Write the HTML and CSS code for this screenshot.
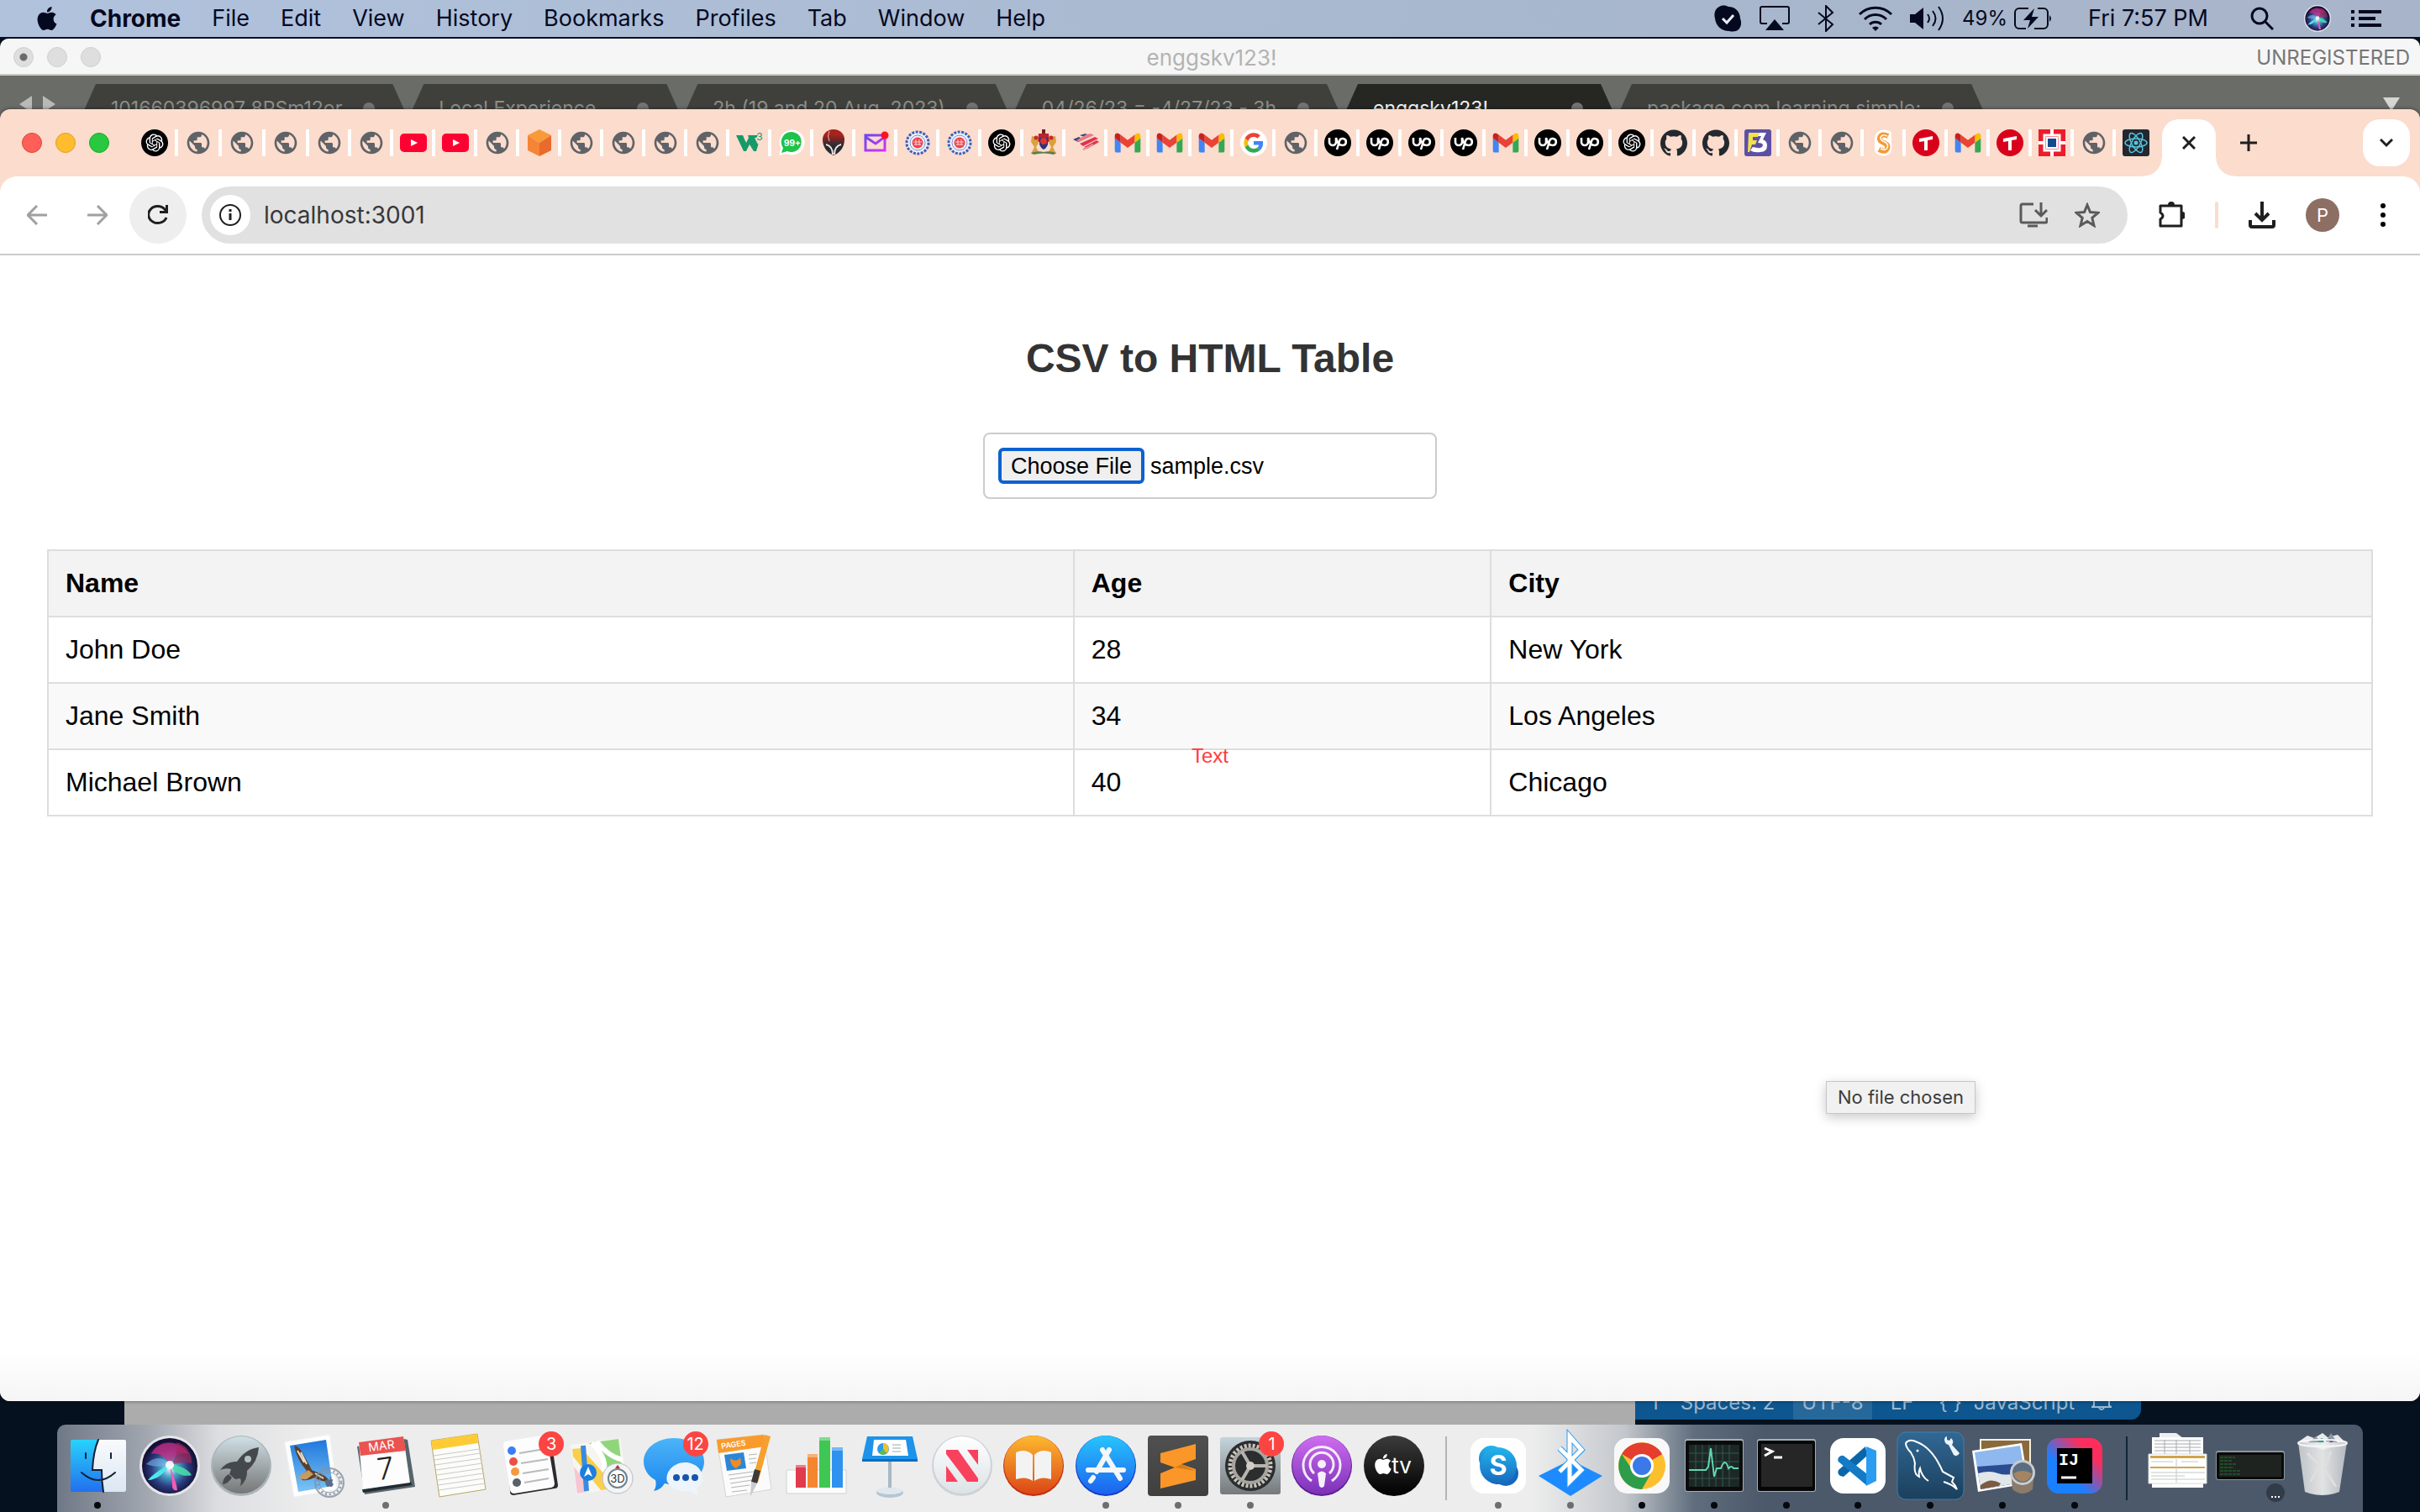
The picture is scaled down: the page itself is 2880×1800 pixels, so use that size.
FILE: index.html
```html
<!DOCTYPE html>
<html lang="en">
<head>
<meta charset="utf-8">
<title>CSV to HTML Table</title>
<link rel="stylesheet" href="styles.css">
</head>
<body>
<svg class="sprite" aria-hidden="true">
  <defs>
    <linearGradient id="gFinder" x1="0" y1="0" x2="0" y2="1"><stop offset="0" stop-color="#27d3fc"/><stop offset="1" stop-color="#2270ee"/></linearGradient>
    <linearGradient id="gFace" x1="0" y1="0" x2="0" y2="1"><stop offset="0" stop-color="#f9fafc"/><stop offset="1" stop-color="#dbe7f3"/></linearGradient>
    <radialGradient id="gSiri" cx=".5" cy=".55" r=".5"><stop offset="0" stop-color="#e8fbff"/><stop offset=".3" stop-color="#4aa3c9"/><stop offset=".65" stop-color="#2b3d80"/><stop offset="1" stop-color="#130f35"/></radialGradient>
    <linearGradient id="gRocket" x1="0" y1="0" x2="0" y2="1"><stop offset="0" stop-color="#cfe0e6"/><stop offset="1" stop-color="#767676"/></linearGradient>
    <linearGradient id="gSky" x1="0" y1="0" x2="0" y2="1"><stop offset="0" stop-color="#1f78dd"/><stop offset="1" stop-color="#7cc4f4"/></linearGradient>
    <linearGradient id="gMsg" x1="0" y1="0" x2="0" y2="1"><stop offset="0" stop-color="#4cb4f8"/><stop offset="1" stop-color="#1a86ee"/></linearGradient>
    <linearGradient id="gBooks" x1="0" y1="0" x2="0" y2="1"><stop offset="0" stop-color="#fdb92f"/><stop offset="1" stop-color="#dc4517"/></linearGradient>
    <linearGradient id="gStore" x1="0" y1="0" x2="0" y2="1"><stop offset="0" stop-color="#27c5fd"/><stop offset="1" stop-color="#1c62ef"/></linearGradient>
    <linearGradient id="gPod" x1="0" y1="0" x2="0" y2="1"><stop offset="0" stop-color="#cf6df0"/><stop offset="1" stop-color="#7b31b8"/></linearGradient>
    <linearGradient id="gNews" x1="0" y1="0" x2="0" y2="1"><stop offset="0" stop-color="#ffffff"/><stop offset="1" stop-color="#dde2e6"/></linearGradient>
    <linearGradient id="gTv" x1="0" y1="0" x2="0" y2="1"><stop offset="0" stop-color="#3c3c3c"/><stop offset="1" stop-color="#000000"/></linearGradient>
    <linearGradient id="gSubl" x1="0" y1="0" x2="0" y2="1"><stop offset="0" stop-color="#505050"/><stop offset="1" stop-color="#3f3f3f"/></linearGradient>
    <linearGradient id="gGear" x1="0" y1="0" x2="0" y2="1"><stop offset="0" stop-color="#c5d5dc"/><stop offset="1" stop-color="#75797b"/></linearGradient>
    <linearGradient id="gSkype" x1="0" y1="0" x2="0" y2="1"><stop offset="0" stop-color="#22b5ec"/><stop offset="1" stop-color="#1768bd"/></linearGradient>
    <linearGradient id="gSql" x1="0" y1="0" x2="0" y2="1"><stop offset="0" stop-color="#316894"/><stop offset="1" stop-color="#1b3f5c"/></linearGradient>
    <linearGradient id="gIj" x1="0" y1="1" x2="1" y2="0"><stop offset=".35" stop-color="#1a80ff"/><stop offset=".75" stop-color="#fb2e5d"/></linearGradient>
    <linearGradient id="gMail" x1="0" y1="0" x2="1" y2="1"><stop offset="0" stop-color="#6a48f2"/><stop offset="1" stop-color="#d633f3"/></linearGradient>
    <linearGradient id="gBall" x1="0" y1="0" x2="0" y2="1"><stop offset=".2" stop-color="#a8231d"/><stop offset=".65" stop-color="#232b33"/></linearGradient>
    <linearGradient id="gCan" x1="0" y1="0" x2="1" y2="0"><stop offset="0" stop-color="#cdd0d2"/><stop offset=".5" stop-color="#f2f2f1"/><stop offset="1" stop-color="#bfc3c6"/></linearGradient>
  </defs>
  <symbol id="globe" viewBox="0 0 24 24"><path fill="#5f6368" d="M12 2C6.480 2 2 6.480 2 12s4.480 10 10 10 10-4.480 10-10S17.520 2 12 2zm-1 17.930c-3.950-.490-7-3.850-7-7.930 0-.620.080-1.210.210-1.790L9 15v1c0 1.100.900 2 2 2v1.930zm6.900-2.540c-.260-.810-1-1.390-1.900-1.390h-1v-3c0-.550-.450-1-1-1H8v-2h2c.550 0 1-.450 1-1V7h2c1.100 0 2-.900 2-2v-.410c2.930 1.190 5 4.060 5 7.410 0 2.080-.800 3.970-2.100 5.390z"/></symbol>
  <symbol id="gpt" viewBox="0 0 32 32"><circle cx="16" cy="16" r="16"/><path transform="translate(5.500 5.500) scale(.875)" fill="#fff" d="M22.2819 9.8211a5.9847 5.9847 0 0 0-.5157-4.9108 6.0462 6.0462 0 0 0-6.5098-2.9A6.0651 6.0651 0 0 0 4.9807 4.1818a5.9847 5.9847 0 0 0-3.9977 2.9 6.0462 6.0462 0 0 0 .7427 7.0966 5.98 5.98 0 0 0 .511 4.9107 6.051 6.051 0 0 0 6.5146 2.9001A5.9847 5.9847 0 0 0 13.2599 24a6.0557 6.0557 0 0 0 5.7718-4.2058 5.9894 5.9894 0 0 0 3.9977-2.9001 6.0557 6.0557 0 0 0-.7475-7.0729zm-9.022 12.6081a4.4755 4.4755 0 0 1-2.8764-1.0408l.1419-.0804 4.7783-2.7582a.7948.7948 0 0 0 .3927-.6813v-6.7369l2.02 1.1686a.071.071 0 0 1 .038.052v5.5826a4.504 4.504 0 0 1-4.4945 4.4944zm-9.6607-4.1254a4.4708 4.4708 0 0 1-.5346-3.0137l.142.0852 4.783 2.7582a.7712.7712 0 0 0 .7806 0l5.8428-3.3685v2.3324a.0804.0804 0 0 1-.0332.0615L9.74 19.9502a4.4992 4.4992 0 0 1-6.1408-1.6464zM2.3408 7.8956a4.485 4.485 0 0 1 2.3655-1.9728V11.6a.7664.7664 0 0 0 .3879.6765l5.8144 3.3543-2.0201 1.1685a.0757.0757 0 0 1-.071 0l-4.8303-2.7865A4.504 4.504 0 0 1 2.3408 7.872zm16.5963 3.8558L13.1038 8.364 15.1192 7.2a.0757.0757 0 0 1 .071 0l4.8303 2.7913a4.4944 4.4944 0 0 1-.6765 8.1042v-5.6772a.79.79 0 0 0-.407-.667zm2.0107-3.0231l-.142-.0852-4.7735-2.7818a.7759.7759 0 0 0-.7854 0L9.409 9.2297V6.8974a.0662.0662 0 0 1 .0284-.0615l4.8303-2.7866a4.4992 4.4992 0 0 1 6.6802 4.66zM8.3065 12.863l-2.02-1.1638a.0804.0804 0 0 1-.038-.0567V6.0742a4.4992 4.4992 0 0 1 7.3757-3.4537l-.142.0805L8.704 5.459a.7948.7948 0 0 0-.3927.6813zm1.0976-2.3654l2.602-1.4998 2.6069 1.4998v2.9994l-2.5974 1.4997-2.6067-1.4997Z"/></symbol>
  <symbol id="youtube" viewBox="0 0 32 32"><rect y="5" width="32" height="22" rx="5" fill="#ff0033"/><path d="M13 12l8 4-8 4z" fill="#fff"/></symbol>
  <symbol id="gmail" viewBox="50 31 92 88"><path fill="#4285f4" d="M58 108h14V74L52 59v43c0 3.320 2.690 6 6 6"/><path fill="#34a853" d="M120 108h14c3.320 0 6-2.690 6-6V59l-20 15"/><path fill="#fbbc04" d="M120 48v26l20-15v-8c0-7.420-8.470-11.650-14.400-7.200"/><path fill="#ea4335" d="M72 74V48l24 18 24-18v26L96 92"/><path fill="#c5221f" d="M52 51v8l20 15V48l-5.600-4.200c-5.940-4.450-14.400-.220-14.400 7.200"/></symbol>
  <symbol id="upwork" viewBox="0 0 32 32"><circle cx="16" cy="16" r="16"/><path d="M6 10v5a4 4 0 0 0 8 0v-5c1 5 3 9 8 9a4 4 0 1 0-4-5l-3 10" fill="none" stroke="#fff" stroke-width="2.600"/></symbol>
  <symbol id="github" viewBox="0 0 24 24"><path fill="#24292f" d="M12 .297c-6.630 0-12 5.373-12 12 0 5.303 3.438 9.800 8.205 11.385.6.113.82-.258.82-.577 0-.285-.01-1.040-.015-2.040-3.338.724-4.042-1.610-4.042-1.610C4.422 18.070 3.633 17.700 3.633 17.700c-1.087-.744.084-.729.084-.729 1.205.084 1.838 1.236 1.838 1.236 1.070 1.835 2.809 1.305 3.495.998.108-.776.417-1.305.76-1.605-2.665-.3-5.466-1.332-5.466-5.930 0-1.310.465-2.380 1.235-3.220-.135-.303-.54-1.523.105-3.176 0 0 1.005-.322 3.300 1.230.96-.267 1.980-.399 3-.405 1.020.006 2.040.138 3 .405 2.280-1.552 3.285-1.230 3.285-1.230.645 1.653.24 2.873.12 3.176.765.84 1.230 1.910 1.230 3.220 0 4.610-2.805 5.625-5.475 5.920.42.36.81 1.096.81 2.220 0 1.606-.015 2.896-.015 3.286 0 .315.21.69.825.57C20.565 22.092 24 17.592 24 12.297c0-6.627-5.373-12-12-12"/></symbol>
  <symbol id="tredt" viewBox="0 0 32 32"><circle cx="16" cy="16" r="16" fill="#d9001b"/><path d="M8 11l16-3v4l-6 1v12h-4V14l-6 1z" fill="#fff"/></symbol>
  <symbol id="seal" viewBox="0 0 32 32"><circle cx="16" cy="16" r="13" fill="#eef0fa" stroke="#3f5fb4" stroke-width="3" stroke-dasharray="3 1.500"/><circle cx="16" cy="16" r="9" fill="none" stroke="#7d92cf"/><circle cx="16" cy="16" r="6.500" fill="#f0444b"/><path d="M11 15h10M12 18h8M14 12v7M18 12v7" stroke="#fbd0d2"/></symbol>
  <symbol id="apple" viewBox="0 0 24 24"><path fill="currentColor" d="M12.152 6.896c-.948 0-2.415-1.078-3.960-1.040-2.040.027-3.910 1.183-4.961 3.014-2.117 3.675-.546 9.103 1.519 12.090 1.013 1.454 2.208 3.090 3.792 3.039 1.520-.065 2.090-.987 3.935-.987 1.831 0 2.350.987 3.960.948 1.637-.026 2.676-1.480 3.676-2.948 1.156-1.688 1.636-3.325 1.662-3.415-.039-.013-3.182-1.221-3.220-4.857-.026-3.040 2.480-4.494 2.597-4.559-1.429-2.090-3.623-2.324-4.390-2.376-2-.156-3.675 1.090-4.610 1.090zM15.530 3.830c.843-1.012 1.400-2.427 1.245-3.830-1.207.052-2.662.805-3.532 1.818-.78.896-1.454 2.338-1.273 3.714 1.338.104 2.715-.688 3.559-1.701"/></symbol>
  <symbol id="siri" viewBox="0 0 72 72"><circle cx="36" cy="36" r="36" fill="#e6e6ea"/><circle cx="36" cy="36" r="33" fill="url(#gSiri)"/><path d="M14 22C22 4 48 4 58 22c-8-3-16 0-22 13C30 24 22 20 14 22z" fill="#d02c86" opacity=".75"/><path d="M44 8c12 3 19 14 18 25-8-2-18 0-26 2 6-6 10-14 8-27z" fill="#a3285c" opacity=".7"/><path d="M36 35C24 40 14 48 10 53c10 0 20-8 26-18z" fill="#4fe6ea"/><path d="M36 35c12 0 22 5 26 12-10 3-20-2-26-12z" fill="#49dba8" opacity=".9"/><path d="M36 35c3 10 8 20 9 30-3 1-6-1-6-5 0-8-2-16-3-25z" fill="#f45bb4"/><path d="M36 35C28 25 18 24 8 34c10 4 20 3 28 1z" fill="#7ab4e8" opacity=".6"/><circle cx="36" cy="35" r="5" fill="#fff" opacity=".9"/></symbol>
</svg>

<div class="desktop">
  <header class="menubar">
    <nav class="menus" aria-label="Menu bar">
      <button class="menu" aria-label="Apple"><svg class="i28"><use href="#apple"/></svg></button>
      <button class="menu menu-app">Chrome</button>
      <button class="menu">File</button>
      <button class="menu">Edit</button>
      <button class="menu">View</button>
      <button class="menu">History</button>
      <button class="menu">Bookmarks</button>
      <button class="menu">Profiles</button>
      <button class="menu">Tab</button>
      <button class="menu">Window</button>
      <button class="menu">Help</button>
    </nav>
    <div class="status">
      <svg class="s-check" viewBox="0 0 32 32"><path d="M8 1c4-1 7 0 9 1 8 0 14 6 14 14 2 5 1 9-1 12-3 4-8 4-12 3C9 31 2 25 1 16-1 9 2 3 8 1z" fill="#04091f"/><path d="M10 16l5 5 8-9" fill="none" stroke="#e9eef6" stroke-width="3"/></svg>
      <svg class="s-airplay" viewBox="0 0 36 32"><path d="M9 22H3a2 2 0 0 1-2-2V4a2 2 0 0 1 2-2h30a2 2 0 0 1 2 2v16a2 2 0 0 1-2 2h-6" fill="none" stroke="#04091f" stroke-width="2"/><path d="M18 17l11 13H7z" fill="#04091f"/></svg>
      <svg class="s-bt" viewBox="0 0 20 32"><path d="M1 9l17 14-8 8V1l8 8L1 23" fill="none" stroke="#04091f" stroke-width="2"/></svg>
      <svg class="s-wifi" viewBox="0 0 42 32"><g fill="none" stroke="#04091f" stroke-width="3"><path d="M2 11a27 27 0 0 1 38 0M8 17a18 18 0 0 1 26 0M14 23a10 10 0 0 1 14 0"/></g><path d="M21 31l-4-4a6 6 0 0 1 8 0z" fill="#04091f"/></svg>
      <svg class="s-vol" viewBox="0 0 42 32"><path d="M0 11h6l10-8v26L6 21H0z" fill="#04091f"/><g fill="none" stroke="#04091f" stroke-width="2"><path d="M21 11q4 5 0 10M27 7q7 9 0 18M34 2q10 14 0 28"/></g></svg>
      <span class="s-battery">49%<svg viewBox="0 0 46 26"><path d="M17 1H6a5 5 0 0 0-5 5v14a5 5 0 0 0 5 5h8M28 1h7a5 5 0 0 1 5 5v14a5 5 0 0 1-5 5H24" fill="none" stroke="#04091f" stroke-width="2"/><path d="M24 1L11 15h8l-3 10 13-14h-8z" fill="#04091f"/><path d="M42 9q4 4 0 8z" fill="#04091f"/></svg></span>
      <time class="s-clock">Fri 7:57 PM</time>
      <svg class="s-search" viewBox="0 0 28 28"><circle cx="11" cy="11" r="9" fill="none" stroke="#04091f" stroke-width="3"/><path d="M18 18l9 9" stroke="#04091f" stroke-width="3"/></svg>
      <svg class="s-siri"><use href="#siri"/></svg>
      <svg class="s-list" viewBox="0 0 36 22"><path d="M0 3h4M0 11h4M0 19h4M9 3h27M9 11h20M9 19h27" stroke="#04091f" stroke-width="4"/></svg>
    </div>
  </header>

  <section class="editor" aria-label="Text editor">
    <div class="editor-title">
      <span class="lights lights-off"><i class="edited"></i><i></i><i></i></span>
      <span class="editor-name">enggskv123!</span>
      <span class="editor-reg">UNREGISTERED</span>
    </div>
    <div class="editor-strip">
      <svg class="editor-nav" viewBox="0 0 44 24"><path d="M15 2v20L0 12zM28 2v20l15-10z" fill="#b9bab7"/></svg>
      <div class="editor-tabs">
        <button class="etab">101660396997 8PSm12or<i></i></button>
        <button class="etab">Local Experience<i></i></button>
        <button class="etab">2h (19 and 20 Aug, 2023)<i></i></button>
        <button class="etab">04/26/23 = -4/27/23 - 3h<i></i></button>
        <button class="etab etab-on">enggskv123!<i></i></button>
        <button class="etab">package com.learning.simple;<i></i></button>
      </div>
      <svg class="editor-more" viewBox="0 0 20 16"><path d="M0 0h20L10 16z" fill="#d5d6d3"/></svg>
    </div>
  </section>

  <div class="backdrop"></div>
  <footer class="code-status">
    <span>1</span><span>Spaces: 2</span><span class="lit">UTF-8</span><span>LF</span><span>{ }</span><span>JavaScript</span>
    <svg class="bell" viewBox="0 0 24 28"><path d="M3 20V10a9 9 0 0 1 18 0v10l2 2H1zM9 23q3 4 6 0" fill="none" stroke="#9db8cd" stroke-width="2"/></svg>
  </footer>

  <section class="browser" aria-label="Browser">
    <div class="tabstrip">
      <span class="lights"><i class="red"></i><i class="yellow"></i><i class="green"></i></span>
      <nav class="tabs tabs-first" aria-label="Tabs">
        <button class="tab"><svg><use href="#gpt"/></svg></button>
        <button class="tab"><svg><use href="#globe"/></svg></button>
        <button class="tab"><svg><use href="#globe"/></svg></button>
        <button class="tab"><svg><use href="#globe"/></svg></button>
      </nav>
      <nav class="tabs" aria-label="More tabs">
        <button class="tab"><svg><use href="#globe"/></svg></button>
        <button class="tab"><svg><use href="#globe"/></svg></button>
        <button class="tab"><svg><use href="#youtube"/></svg></button>
        <button class="tab"><svg><use href="#youtube"/></svg></button>
        <button class="tab"><svg><use href="#globe"/></svg></button>
        <button class="tab"><svg viewBox="0 0 32 32"><path d="M16 0l14 7-14 9L2 7z" fill="#f99a38"/><path d="M2 7l14 9v16L2 25z" fill="#f58536"/><path d="M30 7l-14 9v16l14-7z" fill="#ea6a2c"/></svg></button>
        <button class="tab"><svg><use href="#globe"/></svg></button>
        <button class="tab"><svg><use href="#globe"/></svg></button>
        <button class="tab"><svg><use href="#globe"/></svg></button>
        <button class="tab"><svg><use href="#globe"/></svg></button>
        <button class="tab"><svg viewBox="0 0 32 32"><path d="M0 7h8q2 5 4 9l3-6-1-3h12l-2 3h-2l4 8 1-2-3 10h-3l-5-8-4 8H9z" fill="#159a68"/><text x="28" y="13" class="t-w3">3</text></svg></button>
        <button class="tab"><svg viewBox="0 0 32 32"><path d="M1 31l2-9a15 15 0 1 1 7 7z" fill="#fff"/><path d="M4 28l2-6a12 12 0 1 1 5 4z" fill="#1fc24d"/><text x="17" y="20" class="t-99">99+</text></svg></button>
        <button class="tab"><svg viewBox="0 0 32 32"><path d="M16 0c8 0 13 6 13 12 0 10-6 16-13 19C9 28 3 22 3 12 3 6 8 0 16 0z" fill="url(#gBall)"/><path d="M7 18q8 2 8 12M25 18q-8 2-8 12" fill="none" stroke="#f4e3da" stroke-width="2"/><path d="M11 2q-3 6 0 12" fill="none" stroke="#f1b7b0"/></svg></button>
        <button class="tab"><svg viewBox="0 0 32 32"><path d="M4 7h23v18H4zM4 9l12 8 11-8" fill="none" stroke="url(#gMail)" stroke-width="3"/><circle cx="27" cy="7" r="4.500" fill="#ff1020"/></svg></button>
        <button class="tab"><svg><use href="#seal"/></svg></button>
        <button class="tab"><svg><use href="#seal"/></svg></button>
        <button class="tab"><svg><use href="#gpt"/></svg></button>
        <button class="tab"><svg viewBox="0 0 32 32"><path d="M14 0h4v5h-4z" fill="#7c1c22"/><path d="M2 8l5 1 3 7-3 5 4 8H1l4-8-4-6zM30 8l-5 1-3 7 3 5-4 8h10l-4-8 4-6z" fill="#d9a23c"/><path d="M10 5h12l1 9-7 5-7-5z" fill="#b3262c"/><path d="M11 10h10v8q-2 5-5 6-3-1-5-6z" fill="#28367a"/><circle cx="16" cy="14" r="4" fill="#e2312f"/><circle cx="7" cy="10" r="2.500" fill="#c62a2a"/><circle cx="25" cy="10" r="2.500" fill="#c62a2a"/><path d="M1 28q8-3 15-1 7-2 15 1l-3 2q-12-3-24 0z" fill="#5d7d4d"/></svg></button>
        <button class="tab"><svg viewBox="0 0 32 32"><path d="M1 12l7-3 5 3-6 3zM9 7l7-2 5 3-4 2z" fill="#31477a"/><path d="M9 17l18-8 4 2-18 9zM14 21l15-8 3 2-14 8z" fill="#e0354b"/><path d="M17 6l5-1 4 2-18 8-3-2z" fill="#e77d8a"/><path d="M13 24l12-6" stroke="#e98f9a" stroke-width="2"/></svg></button>
        <button class="tab"><svg><use href="#gmail"/></svg></button>
        <button class="tab"><svg><use href="#gmail"/></svg></button>
        <button class="tab"><svg><use href="#gmail"/></svg></button>
        <button class="tab"><svg viewBox="-9 -9 66 66"><circle cx="24" cy="24" r="33" fill="#fff"/><path fill="#ea4335" d="M24 9.500c3.540 0 6.710 1.220 9.210 3.600l6.850-6.850C35.900 2.380 30.470 0 24 0 14.620 0 6.510 5.380 2.560 13.220l7.980 6.190C12.430 13.720 17.740 9.500 24 9.500z"/><path fill="#4285f4" d="M46.980 24.550c0-1.570-.150-3.090-.380-4.550H24v9.020h12.940c-.580 2.960-2.260 5.480-4.780 7.180l7.730 6c4.510-4.180 7.090-10.360 7.090-17.650z"/><path fill="#fbbc05" d="M10.530 28.590c-.480-1.450-.760-2.990-.760-4.590s.270-3.140.760-4.590l-7.980-6.190C.92 16.460 0 20.120 0 24c0 3.880.92 7.540 2.560 10.780l7.970-6.190z"/><path fill="#34a853" d="M24 48c6.480 0 11.930-2.130 15.890-5.810l-7.730-6c-2.150 1.450-4.920 2.300-8.160 2.300-6.260 0-11.570-4.220-13.470-9.910l-7.980 6.190C6.510 42.620 14.620 48 24 48z"/></svg></button>
        <button class="tab"><svg><use href="#globe"/></svg></button>
        <button class="tab"><svg><use href="#upwork"/></svg></button>
        <button class="tab"><svg><use href="#upwork"/></svg></button>
        <button class="tab"><svg><use href="#upwork"/></svg></button>
        <button class="tab"><svg><use href="#upwork"/></svg></button>
        <button class="tab"><svg><use href="#gmail"/></svg></button>
        <button class="tab"><svg><use href="#upwork"/></svg></button>
        <button class="tab"><svg><use href="#upwork"/></svg></button>
        <button class="tab"><svg><use href="#gpt"/></svg></button>
        <button class="tab"><svg><use href="#github"/></svg></button>
        <button class="tab"><svg><use href="#github"/></svg></button>
        <button class="tab"><svg viewBox="0 0 32 32"><rect width="32" height="32" rx="3" fill="#5c50a5"/><path d="M5 4h13l-2 5h-6v4h5l-2 5H9l-3 9H4z" fill="#f3e14b"/><path d="M18 4h8l-4 8q5 2 5 7 0 8-8 8-8 1-12-2l3-4q11 3 12-2 0-3-6-3l4-8h-4z" fill="#fff"/></svg></button>
        <button class="tab"><svg><use href="#globe"/></svg></button>
        <button class="tab"><svg><use href="#globe"/></svg></button>
        <button class="tab"><svg viewBox="0 0 32 32"><path d="M12 1q10-2 13 3v12q2 14-6 15-10 2-14-5V10q2-8 7-9z" fill="#fff"/><path d="M21 8q-8-4-10 2-1 4 5 6 6 3 4 7-2 5-10 1" fill="none" stroke="#f39a35" stroke-width="6"/><path d="M20 8q-7-3-8 2 0 3 5 5 5 3 3 7-2 4-8 1" fill="none" stroke="#fff" stroke-width="1.500"/></svg></button>
        <button class="tab"><svg><use href="#tredt"/></svg></button>
        <button class="tab"><svg><use href="#gmail"/></svg></button>
        <button class="tab"><svg><use href="#tredt"/></svg></button>
        <button class="tab"><svg viewBox="0 0 32 32"><rect width="32" height="32" fill="#ed1c2b"/><path d="M14 0h4v6h-4zM14 26h4v6h-4zM0 14h6v4H0zM26 14h6v4h-6z" fill="#fff"/><path d="M7 7h18v18H7z" fill="none" stroke="#fff" stroke-width="3"/><rect x="9" y="9" width="14" height="14" fill="#fff"/><rect x="11" y="11" width="10" height="10" fill="#134a8c"/></svg></button>
        <button class="tab"><svg><use href="#globe"/></svg></button>
        <button class="tab"><svg viewBox="0 0 32 32"><rect width="32" height="32" rx="3" fill="#23272f"/><g fill="none" stroke="#58c4dc" stroke-width="1.500"><ellipse cx="16" cy="16" rx="13" ry="5"/><ellipse cx="16" cy="16" rx="13" ry="5" transform="rotate(60 16 16)"/><ellipse cx="16" cy="16" rx="13" ry="5" transform="rotate(120 16 16)"/></g><circle cx="16" cy="16" r="2.500" fill="#58c4dc"/></svg></button>
      </nav>
      <div class="tab-active"><button class="plain" aria-label="Close tab"><svg class="i16" viewBox="0 0 16 16"><path d="M1 1l14 14M15 1L1 15" stroke="#1f1f1f" stroke-width="3"/></svg></button></div>
      <button class="plain newtab" aria-label="New tab"><svg class="i20" viewBox="0 0 20 20"><path d="M10 0v20M0 10h20" stroke="#1f1f1f" stroke-width="3"/></svg></button>
      <button class="tab-search" aria-label="Search tabs"><svg class="i16" viewBox="0 0 16 16"><path d="M1 4l7 7 7-7" fill="none" stroke="#1f1f1f" stroke-width="3"/></svg></button>
    </div>

    <div class="toolbar">
      <button class="tool" aria-label="Back"><svg class="i24" viewBox="0 0 24 24"><path d="M12 1L1 12l11 11M1 12h23" fill="none" stroke="#a0a0a0" stroke-width="3"/></svg></button>
      <button class="tool" aria-label="Forward"><svg class="i24" viewBox="0 0 24 24"><path d="M12 1l11 11-11 11M23 12H0" fill="none" stroke="#a0a0a0" stroke-width="3"/></svg></button>
      <button class="tool reload" aria-label="Reload"><svg class="i24" viewBox="0 0 24 24"><path d="M22 15a11 10 0 1 1-2-10l2 3" fill="none" stroke="#1f1f1f" stroke-width="3"/><path d="M24 0v10H14V7h7V0z" fill="#1f1f1f"/></svg></button>
      <div class="omnibox">
        <button class="site-info" aria-label="Site information"><svg class="i26" viewBox="0 0 26 26"><circle cx="13" cy="13" r="12" fill="none" stroke="#1f1f1f" stroke-width="2"/><path d="M13 11v8M13 6v3" stroke="#1f1f1f" stroke-width="3"/></svg></button>
        <input class="url" type="text" aria-label="Address" value="localhost:3001">
        <button class="plain" aria-label="Install"><svg class="i34" viewBox="0 0 34 30"><path d="M17 2H4a2 2 0 0 0-2 2v18a2 2 0 0 0 2 2h27a2 2 0 0 0 2-2v-4M10 28h12" fill="none" stroke="#5a5a5a" stroke-width="3"/><path d="M26 0v15M19 9l7 7 7-7" fill="none" stroke="#5a5a5a" stroke-width="3"/></svg></button>
        <button class="plain" aria-label="Bookmark"><svg class="i30" viewBox="0 0 30 30"><path d="M15 3l3.500 8.500 9.500.800-7.200 6 2.200 9.200-8-5-8 5 2.200-9.200L2 12.300l9.500-.800z" fill="none" stroke="#5a5a5a" stroke-width="3"/></svg></button>
      </div>
      <button class="tool ext" aria-label="Extensions"><svg class="i32" viewBox="0 0 32 32"><path d="M3 5h25v24H3v-8q6-4 0-8z" fill="none" stroke="#1f1f1f" stroke-width="3" stroke-linejoin="round"/><path d="M12 4a4 4 0 0 1 8 0zM29 12a4 4 0 0 1 0 9z" fill="#1f1f1f"/></svg></button>
      <span class="tool-rule"></span>
      <button class="tool" aria-label="Downloads"><svg class="i32" viewBox="0 0 32 32"><path d="M16 0v22M8 14l8 8 8-8M2 22v6a2 2 0 0 0 2 2h24a2 2 0 0 0 2-2v-6" fill="none" stroke="#1f1f1f" stroke-width="4"/></svg></button>
      <button class="tool" aria-label="Profile"><span class="avatar">P</span></button>
      <button class="tool" aria-label="More"><svg class="i32" viewBox="0 0 32 32"><circle cx="16" cy="5" r="3"/><circle cx="16" cy="16" r="3"/><circle cx="16" cy="27" r="3"/></svg></button>
    </div>

    <main class="page">
      <h1>CSV to HTML Table</h1>
      <input id="csv" class="picker" type="file" accept=".csv" aria-label="CSV file">
      <table>
        <thead><tr><th>Name</th><th>Age</th><th>City</th></tr></thead>
        <tbody>
          <tr><td>John Doe</td><td>28</td><td>New York</td></tr>
          <tr><td>Jane Smith</td><td>34</td><td>Los Angeles</td></tr>
          <tr><td>Michael Brown</td><td>40</td><td>Chicago</td></tr>
        </tbody>
      </table>
    </main>
  </section>

  <span class="note">Text</span>
  <div class="tooltip" role="tooltip">No file chosen</div>

  <nav class="dock" aria-label="Dock">
    <button class="app run dark"><svg viewBox="0 0 84 92"><rect x="10" y="18" width="66" height="62" rx="2" fill="url(#gFinder)"/><path d="M43 18h31a2 2 0 0 1 2 2v58a2 2 0 0 1-2 2H49q-2-12-2-26H36q1-22 7-36z" fill="url(#gFace)"/><path d="M43 18q-6 14-7 36h11q0 14 2 26M28 34v6M58 34v6M23 57q20 18 40 0" fill="none" stroke="#132033" stroke-width="2" stroke-linecap="round"/></svg></button>
    <button class="app"><svg viewBox="0 0 84 92"><use href="#siri" x="6" y="13" width="72" height="72"/></svg></button>
    <button class="app"><svg viewBox="0 0 84 92"><circle cx="42" cy="49" r="36" fill="#a9b5ba"/><circle cx="42" cy="48" r="34" fill="url(#gRocket)"/><path d="M63 27q-16 2-26 17-12-1-20 10 7-3 13-1l-2 6 7 6 6-1q2 5-1 10 10-8 9-19 13-11 14-28z" fill="#45494d"/><path d="M27 59q-7 4-7 12 7-1 11-8z" fill="#45494d"/><circle cx="50" cy="41" r="4" fill="#b4c1c6"/></svg></button>
    <button class="app"><svg viewBox="0 0 84 92"><path d="M8 21l53-9 9 65-51 9z" fill="#fff" stroke="#f4f4f4" stroke-width="2" stroke-dasharray="3 3"/><path d="M14 25l43-7 8 55-41 7z" fill="url(#gSky)"/><path d="M19 25q6 1 9 7l8 14 4 8 14 6q6 4 7 8-10 0-18-5-8 4-14 3-3-2-2-5l7-6q-12-14-15-30z" fill="#5b4029"/><path d="M24 62l12-8 6 5-8 6q-8 1-10-3z" fill="#c79a5f"/><path d="M23 31l8 14M27 33l7 14M44 58l10 6" stroke="#e7dccb" stroke-width="2"/><g fill="none" stroke="#8390a3" opacity=".8"><circle cx="61" cy="69" r="17" stroke-width="2"/><circle cx="61" cy="69" r="12"/><circle cx="61" cy="69" r="14" stroke-width="3" stroke-dasharray="2 3"/></g><use href="#apple" x="55" y="62" width="12" height="12" color="#5b6c85"/></svg></button>
    <button class="app run"><svg viewBox="0 0 84 92"><path d="M8 26l56-9 4 1 9 56-60 9z" fill="#56646c"/><path d="M14 77l58-9 1 4-58 9z" fill="#222b30"/><path d="M10 21l53-7 8 55-56 8z" fill="#fdfdfd"/><path d="M10 21l53-7 3 17-54 6z" fill="#ea5350"/><text x="37" y="30" class="t-mar" transform="rotate(-8 38 26)">MAR</text><text x="42" y="65" class="t-seven" transform="rotate(-8 41 52)">7</text></svg></button>
    <button class="app"><svg viewBox="0 0 84 92"><path d="M10 19l55-8 10 66-55 9z" fill="#fcfcf8" stroke="#b8a56a"/><path d="M10 19l55-8 1 11-54 8z" fill="#fecb36"/><path d="M13 37l55-8M14 42l55-8M15 48l55-8M16 54l55-8M17 60l54-8M18 66l54-8M18 72l55-8M19 78l55-8" stroke="#c9cacc"/></svg></button>
    <button class="app"><svg viewBox="0 0 84 92"><path d="M16 23l48-8q4 0 4 3l8 54q0 4-4 4l-49 8q-4 0-4-4z" fill="#2a2c2f"/><path d="M13 20l44-7q5 0 6 4l9 53q0 4-4 5l-44 7q-4 0-5-4l-8-53q0-4 2-5z" fill="#fdfdfd"/><circle cx="21" cy="31" r="5" fill="#3b7df5"/><circle cx="23" cy="44" r="5" fill="#ee4f45"/><circle cx="25" cy="56" r="5" fill="#f6983b"/><circle cx="27" cy="69" r="5" fill="#596067"/><path d="M30 34l30-5M32 46l32-5M34 58l31-5M36 69l29-5" stroke="#b9babc" stroke-width="2"/></svg><b class="badge">3</b></button>
    <button class="app"><svg viewBox="0 0 84 92"><path d="M5 24l59-8 9 58-60 9z" fill="#f7f5ef"/><path d="M27 22l35-5 6 48-20-4q-2-22-21-39z" fill="#8fd67a"/><path d="M36 20q14 18 31 22M44 60q6-20-14-38" fill="none" stroke="#fff" stroke-width="6"/><path d="M7 29l11-1 28 32 4 17-9 1-33-40z" fill="#f9cf4b"/><path d="M9 50l14 18 2 12-12 2z" fill="#f6c6d2"/><path d="M20 25l4 54" stroke="#3a8be0" stroke-width="6"/><circle cx="26" cy="57" r="10" fill="#1b7fe0"/><path d="M26 50l5 12-5-3-5 3z" fill="#fff"/><circle cx="61" cy="64" r="18" fill="#f3f4f5" stroke="#b7bcc0"/><circle cx="61" cy="64" r="11" fill="#fff" stroke="#6c8390" stroke-width="2"/><path d="M61 48l3 4h-6z" fill="#e02020"/><text x="61" y="69" class="t-3d">3D</text></svg></button>
    <button class="app"><svg viewBox="0 0 84 92"><path d="M42 16c20 0 36 12 36 28S62 72 42 72l-11-2q-5 8-13 9 4-6 2-13C11 61 6 53 6 44c0-16 16-28 36-28z" fill="url(#gMsg)"/><path d="M55 45c12 0 21 8 21 18 0 6-3 10-7 13q0 4 3 8-7-1-10-5-20 3-28-11c-3-12 8-23 21-23z" fill="#eef4fb"/><circle cx="45" cy="63" r="4" fill="#1655ad"/><circle cx="56" cy="63" r="4" fill="#1655ad"/><circle cx="67" cy="63" r="4" fill="#1655ad"/></svg><b class="badge">12</b></button>
    <button class="app"><svg viewBox="0 0 84 92"><path d="M8 18l56-6 9 65-54 9z" fill="#fbfbfb" stroke="#d5d5d5"/><path d="M8 18l56-6 2 14-56 8z" fill="#f99b2c"/><text x="28" y="27" class="t-pages" transform="rotate(-8 26 24)">PAGES</text><path d="M17 36l23-3 3 19-23 3z" fill="#2b86d9"/><path d="M24 40q8 6 12-1l1 8-6 5q-7-3-7-12z" fill="#f48b1f"/><path d="M46 36l10-1M46 41l9-1M47 46l8-1M22 60l30-4M23 65l27-4M24 70l26-4M25 75l22-3M26 80l18-2" stroke="#b5b5b5"/><path d="M65 12l7 2-15 55-7-2z" fill="#f5a02f"/><path d="M53 53l7 2-4 15-7-2z" fill="#3b3b3d"/><path d="M49 68l7 2-8 16z" fill="#c7ccd1"/></svg></button>
    <button class="app"><svg viewBox="0 0 84 92"><path d="M5 54h71v28H5z" fill="#fcfcfc" stroke="#d2d2d2"/><rect x="16" y="48" width="12" height="27" fill="#e23a4d"/><rect x="30" y="35" width="12" height="40" fill="#f6852f"/><rect x="44" y="15" width="13" height="60" fill="#3fc653"/><rect x="59" y="27" width="13" height="48" fill="#2f92f0"/><path d="M16 48h12v3H16zM30 35h12v4H30zM44 15h13v4H44zM59 27h13v4H59z" fill="#fff" opacity=".35"/></svg></button>
    <button class="app"><svg viewBox="0 0 84 92"><path d="M40 43h4v36h-4z" fill="#a9b8c4"/><ellipse cx="42" cy="81" rx="16" ry="6" fill="#b4c6d3"/><ellipse cx="42" cy="79" rx="15" ry="4" fill="#dfe8ee"/><path d="M15 14h54l6 27v3H9v-3z" fill="#1d93ea"/><path d="M9 41h66v3H9z" fill="#0e6dbd"/><path d="M23 18h38l3 19H21z" fill="#fff"/><circle cx="34" cy="29" r="7" fill="#2e9be8"/><path d="M34 29v-7a7 7 0 0 1 6 4zM34 29l6-3a7 7 0 0 1-2 8z" fill="#f0c02d"/><path d="M34 29l4 5a7 7 0 0 1-9 0z" fill="#56c14b"/><path d="M45 24h10M45 28h10M45 32h10" stroke="#9aa" /></svg></button>
    <button class="app"><svg viewBox="0 0 84 92"><circle cx="42" cy="49" r="36" fill="#cdd2d6"/><circle cx="42" cy="48" r="34" fill="url(#gNews)"/><path d="M23 30h14l24 34v4H48L23 35zM48 30h13v18zM23 49v19h14z" fill="#f9415d"/></svg></button>
    <button class="app"><svg viewBox="0 0 84 92"><circle cx="42" cy="49" r="36" fill="#c22d12"/><circle cx="42" cy="48" r="35" fill="url(#gBooks)"/><path d="M41 36q-8-8-20-3v32q12-4 20 2zM43 36q8-8 20-3v32q-12-4-20 2z" fill="#f3f3f3"/></svg></button>
    <button class="app run"><svg viewBox="0 0 84 92"><circle cx="42" cy="49" r="36" fill="#123fc8"/><circle cx="42" cy="48" r="35" fill="url(#gStore)"/><path d="M38 30l21 34M46 30L31 56M21 54h42M27 63l-3 4" stroke="#f4f6f8" stroke-width="6" stroke-linecap="round"/></svg></button>
    <button class="app run"><svg viewBox="0 0 84 92"><rect x="6" y="13" width="72" height="72" rx="4" fill="url(#gSubl)"/><path d="M63 23v18l-17 6 17 6v13L21 76V58l17-7-17-6V34z" fill="#fb9728"/><path d="M38 51l25 4-17-8z" fill="#d97c17"/></svg></button>
    <button class="app run"><svg viewBox="0 0 84 92"><rect x="6" y="15" width="72" height="68" rx="3" fill="url(#gGear)"/><circle cx="42" cy="49" r="30" fill="#2b2d2e"/><circle cx="42" cy="49" r="24" fill="none" stroke="#c6c3bd" stroke-width="5" stroke-dasharray="3 2"/><circle cx="42" cy="49" r="20" fill="none" stroke="#a7a49f" stroke-width="4"/><path d="M42 49h20M42 49L32 32M42 49L32 66" stroke="#b7b4af" stroke-width="4"/><circle cx="42" cy="49" r="5" fill="#d0cdc8"/></svg><b class="badge">1</b></button>
    <button class="app"><svg viewBox="0 0 84 92"><circle cx="42" cy="49" r="36" fill="#5c1e93"/><circle cx="42" cy="48" r="35" fill="url(#gPod)"/><g fill="none" stroke="#f4ecf9" stroke-width="3"><path d="M30 67a22 22 0 1 1 24 0"/><path d="M33 58a14 14 0 1 1 18 0"/></g><circle cx="42" cy="47" r="5" fill="#f7f0fb"/><path d="M37 58q5-5 10 0l-2 15q-3 4-6 0z" fill="#f7f0fb"/></svg></button>
    <button class="app"><svg viewBox="0 0 84 92"><circle cx="42" cy="49" r="36" fill="url(#gTv)"/><use href="#apple" x="17" y="35" width="24" height="24" color="#fff"/><text x="51" y="58" class="t-tv">tv</text></svg></button>
    <span class="dock-rule"></span>
    <button class="app run"><svg viewBox="0 0 84 92"><rect x="9" y="16" width="66" height="66" rx="16" fill="#fff"/><circle cx="34" cy="40" r="15" fill="url(#gSkype)"/><circle cx="51" cy="58" r="15" fill="#1768bd"/><circle cx="42" cy="49" r="22" fill="url(#gSkype)"/><text x="42" y="60" class="t-s">S</text></svg></button>
    <button class="app run"><svg viewBox="0 0 84 92"><path d="M42 42l38 19-38 24L4 61z" fill="#1d8bff"/><path d="M29 28l26 26-14 14V14l14 16-26 26" fill="none" stroke="#2b9bf0" stroke-width="7"/><path d="M29 28l26 26-14 14V14l14 16-26 26" fill="none" stroke="#fff" stroke-width="5"/></svg></button>
    <button class="app run dark"><svg viewBox="0 0 84 92"><rect x="9" y="16" width="66" height="66" rx="15" fill="#f8f8f8"/><circle cx="42" cy="49" r="28" fill="#fcc02e"/><path d="M42 49L18 35a28 28 0 0 1 48 0z" fill="#e33e2f"/><path d="M42 49l24-14H42z" fill="#e33e2f"/><path d="M18 35a28 28 0 0 0 24 42l12-21H32z" fill="#2d9c4b"/><circle cx="42" cy="49" r="14" fill="#fff"/><circle cx="42" cy="49" r="11" fill="#3b79ea"/></svg></button>
    <button class="app run dark"><svg viewBox="0 0 84 92"><rect x="7" y="17" width="70" height="63" rx="3" fill="#9fb0b4"/><rect x="8" y="19" width="68" height="60" rx="2" fill="#0b0b0b"/><rect x="12" y="24" width="60" height="50" fill="#1b2826"/><path d="M20 24v50M28 24v50M36 24v50M44 24v50M52 24v50M60 24v50M12 34h60M12 44h60M12 64h60" stroke="#39544c"/><path d="M12 54h20l3-4 3-22 4 34 3-10h5q5-14 9 0 4-4 6 0h6" fill="none" stroke="#62d6b0" stroke-width="2"/></svg></button>
    <button class="app run dark"><svg viewBox="0 0 84 92"><rect x="7" y="17" width="70" height="63" rx="3" fill="#9fb0b4"/><rect x="8" y="19" width="68" height="60" rx="2" fill="#060606"/><rect x="12" y="23" width="61" height="51" fill="#262626"/><path d="M16 28l9 4-9 5" fill="none" stroke="#fff" stroke-width="3"/><path d="M27 39h10" stroke="#fff" stroke-width="3"/></svg></button>
    <button class="app run dark"><svg viewBox="0 0 84 92"><rect x="9" y="16" width="66" height="66" rx="16" fill="#fff"/><path d="M51 26L19 54q-2 4 2 7l4 1 28-25z" fill="#0a66a8"/><path d="M25 37q-3-1-6 2-2 4 1 6l32 27V58z" fill="#157ac6"/><path d="M52 26l12 5v36l-12 6z" fill="#2a9df0"/></svg></button>
    <button class="app run dark"><svg viewBox="0 0 84 92"><rect x="3" y="9" width="79" height="80" rx="10" fill="url(#gSql)" stroke="#3f7eae"/><path d="M40 67q-8-5-10-15-2 4-1 10-7-3-5-16-1-7-5-13-6-6-6-11 4-6 14-1 18 7 30 35l13 7-2 5q4 4 6 9-6-6-16-9" fill="none" stroke="#fff" stroke-width="2"/><circle cx="27" cy="31" r="1.500" fill="#fff"/><path d="M59 17q1-3 3-3v4l3 1 2-3q4 4 1 8l9 10q-3 5-7 2l-6-12q-5-1-5-7z" fill="#eaf4fb"/></svg></button>
    <button class="app run dark"><svg viewBox="0 0 84 92"><path d="M15 17h61v50H15z" fill="#f4efe2"/><path d="M17 19h57v46H17z" fill="#8a6a3c"/><path d="M6 31l59-9 8 48-60 10z" fill="#fff"/><path d="M9 33l54-8 7 43-54 9z" fill="#8fb8ee"/><path d="M12 50l54-4 4 22-54 9z" fill="#2c4c92"/><path d="M13 58q14-4 24 0t30-2l3 12-54 9z" fill="#e1e6ea"/><path d="M16 72q12-10 24-2l-2 3-22 4z" fill="#7b5c42"/><path d="M52 56h28l-2 21q-12 10-24 0z" fill="#8b7b68"/><circle cx="66" cy="57" r="15" fill="#c9ccce"/><circle cx="66" cy="57" r="12" fill="#5d6d80"/><path d="M55 58q11-6 22 0-2 9-11 10-9-1-11-10z" fill="#a48463"/></svg></button>
    <button class="app run dark"><svg viewBox="0 0 84 92"><rect x="9" y="16" width="66" height="66" rx="14" fill="url(#gIj)"/><rect x="21" y="28" width="42" height="42"/><text x="35" y="48" class="t-ij">IJ</text><path d="M26 63h18" stroke="#fff" stroke-width="3"/></svg></button>
    <span class="dock-rule rule-dark"></span>
    <button class="app"><svg viewBox="0 0 84 92"><path d="M20 10h20l8 6v10H20z" fill="#eceff1"/><path d="M11 15h61v60H11z" fill="#fdfdfd"/><path d="M14 19h55M14 23h55M14 27h55M14 31h55M26 18v17M40 18v17M56 18v17" stroke="#a8aaac"/><path d="M7 35h69v35H7z" fill="#fff" stroke="#dadada"/><path d="M9 37h65v3H9zM9 50h65v2H9z" fill="#cfa54a"/><path d="M10 44h26M46 44h20M10 57h64M10 61h40M10 65h64M40 41v28" stroke="#c4c6c8"/></svg></button>
    <button class="app"><svg viewBox="0 0 84 92"><rect x="1" y="31" width="82" height="35" rx="3" fill="#8b9699"/><rect x="2" y="33" width="80" height="32" rx="2" fill="#0a0a0a"/><rect x="5" y="36" width="74" height="26" fill="#1f2320"/><path d="M6 39h18M6 43h14M6 47h20M6 51h16M6 55h24M6 59h25" stroke="#1f7a30" stroke-dasharray="4 1"/><circle cx="72" cy="81" r="11" fill="#323c48"/><path d="M67 86h2M71 86h2M75 86h2" stroke="#fff" stroke-width="2"/></svg></button>
    <button class="app"><svg viewBox="0 0 84 92"><path d="M14 20l10-7 8 3 10-6 6 5 12-3 10 10-28 8z" fill="#e9eaeb"/><path d="M24 22l10-8 8 9zM46 20l6-10 8 12z" fill="#8b99a2"/><path d="M36 18l6-2 2 6-6 2z" fill="#2e9d86"/><path d="M50 16l5 3-4 6z" fill="#6a4a9a"/><path d="M13 21h58l-9 59q-20 8-41 0z" fill="url(#gCan)" opacity=".9"/><ellipse cx="42" cy="22" rx="29" ry="4" fill="none" stroke="#f5f5f5" stroke-width="2"/><path d="M24 34l14 14-10 20M52 32l-8 20 14 22" fill="none" stroke="#dfdfde" stroke-width="3"/></svg></button>
  </nav>
</div>
<script src="app.js"></script>
</body>
</html>
```

FILE: styles.css
```css
* { box-sizing: border-box; }
body { margin: 0; font-family: "Liberation Sans", Arial, sans-serif; background: #06111f; }
button { font: inherit; color: inherit; background: none; border: 0; padding: 0; margin: 0; }
svg { display: block; flex: none; }
.sprite { position: absolute; width: 0; height: 0; }
.desktop { position: relative; min-height: 100vh; overflow: hidden; font-family: Inter, "Noto Sans", sans-serif; }

.i16 { width: 16px; height: 16px; }
.i20 { width: 20px; height: 20px; }
.i24 { width: 24px; height: 24px; }
.i26 { width: 26px; height: 26px; }
.i28 { width: 28px; height: 32px; }
.i30 { width: 30px; height: 30px; }
.i32 { width: 32px; height: 32px; }
.i34 { width: 34px; height: 30px; }

/* Menu bar */
.menubar { display: flex; justify-content: space-between; align-items: center; height: 44px; padding: 0 46px 0 42px; background: linear-gradient(90deg, #b1c2dd, #a8b8ce 60%, #a8b4c9); color: #04091f; font-size: 27px; line-height: 32px; }
.menus { display: flex; align-items: center; gap: 37px; }
.menu-app { font-size: 28px; font-weight: 700; }
.status { display: flex; align-items: center; }
.s-check { width: 32px; height: 32px; }
.s-airplay { width: 36px; height: 32px; margin-left: 22px; }
.s-bt { width: 20px; height: 32px; margin-left: 33px; }
.s-wifi { width: 42px; height: 32px; margin-left: 28px; }
.s-vol { width: 42px; height: 32px; margin-left: 20px; }
.s-battery { display: flex; align-items: center; gap: 8px; margin-left: 20px; font-size: 24px; }
.s-battery svg { width: 46px; height: 26px; }
.s-clock { margin-left: 42px; }
.s-search { width: 28px; height: 28px; margin-left: 50px; }
.s-siri { width: 32px; height: 32px; margin-left: 36px; }
.s-list { width: 36px; height: 22px; margin-left: 24px; }

/* Text editor window behind the browser */
.editor { position: absolute; top: 46px; left: 0; right: 0; height: 120px; border-radius: 10px 10px 0 0; overflow: hidden; background: #6a6c67; }
.editor-title { display: grid; grid-template-columns: 1fr auto 1fr; align-items: center; height: 44px; padding: 2px 12px 0 16px; background: #f6f6f6; border-bottom: 2px solid #c9cbc8; font-size: 26px; }
.editor-name { color: #b3b3b3; }
.editor-reg { justify-self: end; color: #767676; font-size: 24px; }
.lights { display: flex; gap: 16px; }
.lights i { width: 24px; height: 24px; border-radius: 50%; }
.lights-off i { background: #dedede; border: 1px solid #cfcfcf; }
.lights-off .edited { background: radial-gradient(circle, #6b6b6b 0 4px, #dedede 5px); }
.editor-strip { display: flex; align-items: flex-start; padding-top: 10px; }
.editor-nav { width: 44px; height: 24px; margin: 12px 21px 0 23px; }
.editor-tabs { display: flex; flex: 1; }
.etab { display: flex; align-items: center; justify-content: space-between; min-width: 341px; height: 58px; gap: 25px; padding: 0 47px 0 44px; margin-right: -15px; background: #3f403b; color: #8d8e8a; font-size: 23px; white-space: nowrap; clip-path: polygon(26px 0, calc(100% - 26px) 0, 100% 100%, 0 100%); }
.etab i { width: 14px; height: 14px; border-radius: 50%; background: #73746f; }
.etab-on { background: #262722; color: #f4f4f2; }
.editor-more { width: 20px; height: 16px; margin: 16px 24px 0 0; }

/* Windows peeking out under the browser */
.backdrop { position: absolute; left: 148px; right: 934px; bottom: 0; height: 180px; background: #acacac; }
.code-status { position: absolute; right: 332px; bottom: 110px; width: 602px; height: 46px; display: flex; align-items: center; padding: 0 35px 0 8px; background: #0d568f; border-radius: 0 0 12px 0; color: #9db8cd; font-size: 24px; }
.code-status span { padding: 5px 10px 0; line-height: 41px; white-space: nowrap; }
.code-status span:nth-child(2) { margin-left: 6px; }
.code-status .lit { background: #27689b; margin: 0 12px; }
.code-status span:nth-child(5) { margin-left: 10px; padding-right: 4px; }
.bell { width: 24px; height: 28px; margin-left: auto; }

/* Browser window */
.browser { position: absolute; top: 130px; bottom: 132px; left: 0; right: 0; display: flex; flex-direction: column; background: #fbdccd; border-radius: 12px; overflow: hidden; box-shadow: 0 0 4px #00000080; }
.tabstrip { display: flex; align-items: center; height: 80px; padding: 0 12px 0 26px; }
.tabstrip .lights { margin-right: 38px; }
.red { background: #fe5f57; border: 1px solid #e0443e; }
.yellow { background: #febc2e; border: 1px solid #dea123; }
.green { background: #28c840; border: 1px solid #1aab29; }
.tabs { display: flex; }
.tab { display: flex; align-items: center; justify-content: space-between; width: 42px; height: 32px; margin-right: 8px; border-right: 4px solid #fff; padding-right: 6px; }
.tabs-first .tab { width: 44px; padding-right: 8px; }
.tab svg { width: 32px; height: 32px; }
.tab:last-child { border-right: 0; }
.tabs-first .tab:last-child { border-right: 4px solid #fff; }
.tab-active { position: relative; align-self: flex-end; display: flex; align-items: center; justify-content: center; width: 64px; height: 68px; padding-bottom: 12px; margin-left: -3px; background: #fff; border-radius: 20px 20px 0 0; }
.tab-active::before, .tab-active::after { content: ""; position: absolute; bottom: 0; width: 22px; height: 22px; }
.tab-active::before { right: 100%; background: radial-gradient(circle at 0 0, #fbdccd 21px, #fff 22px); }
.tab-active::after { left: 100%; background: radial-gradient(circle at 100% 0, #fbdccd 21px, #fff 22px); }
.newtab { margin-left: 29px; }
.tab-search { display: flex; align-items: center; justify-content: center; width: 56px; height: 56px; margin-left: auto; border-radius: 20px; background: #fff; }

.toolbar { display: flex; align-items: center; height: 94px; padding: 0 8px; background: #fff; border-bottom: 2px solid #cbcbcb; border-radius: 20px 20px 0 0; }
.tool { display: flex; align-items: center; justify-content: center; width: 72px; height: 68px; }
.reload { width: 68px; margin: 0 18px 0 2px; border-radius: 50%; background: #eee; }
.omnibox { flex: 1; display: flex; align-items: center; height: 68px; padding: 0 33px 0 10px; border-radius: 34px; background: #e1e1e1; }
.site-info { display: flex; align-items: center; justify-content: center; width: 48px; height: 48px; border-radius: 50%; background: #fff; }
.url { flex: 1; border: 0; outline: 0; padding: 0 16px; background: transparent; color: #37383b; font: 28px/36px Inter, "Noto Sans", sans-serif; }
.omnibox .plain + .plain { margin-left: 32px; }
.ext { margin-left: 16px; }
.tool-rule { width: 4px; height: 32px; margin: 0 16px; border-radius: 2px; background: #fbdccd; }
.avatar { width: 40px; height: 40px; border-radius: 50%; background: #8d6e63; color: #fff; font-size: 22px; line-height: 40px; }

/* Page */
.page { flex: 1; padding: 95px 56px 0; background: linear-gradient(#fff calc(100% - 60px), #f5f5f5); font-family: "Liberation Sans", Arial, sans-serif; font-size: 32px; text-align: center; }
h1 { margin: 0 0 60px; color: #333; font-size: 48px; line-height: 56px; }
.picker { display: block; width: 540px; height: 79px; margin: 0 auto 60px; padding: 16px; border: 2px solid #ccc; border-radius: 8px; color: #000; font: 27px/40px "Liberation Sans", Arial, sans-serif; }
.picker::file-selector-button { height: 43px; margin: 0 7px 0 0; padding: 0 11px; border: 4px solid #0d62d0; border-radius: 6px; background: #efefef; color: #000; font: 27px/34px "Liberation Sans", Arial, sans-serif; }
table { width: 100%; border-collapse: collapse; text-align: left; line-height: 37px; }
th, td { padding: 20px; border: 2px solid #ddd; }
th { background: #f3f3f3; }
tbody tr:nth-child(even) { background: #f9f9f9; }

.note { position: absolute; top: 50%; left: 50%; transform: translate(-50%, -50%); color: #ff3b3b; font: 24px/28px "Liberation Sans", Arial, sans-serif; }
.tooltip { position: absolute; right: 529px; bottom: 474px; padding: 0 13px; border: 1px solid #c6c6c6; background: #f1f1f1; color: #3c3c3c; font-size: 22px; line-height: 37px; box-shadow: 0 4px 14px #00000038; }

/* Dock */
.dock { position: absolute; left: 68px; right: 68px; bottom: 0; height: 104px; display: flex; padding: 0 5px; border-radius: 10px 10px 0 0; background: linear-gradient(90deg, #6f7886, #a3a8b1 4%, #dddee1 7%, #ededed 11%, #ededed 64%, #c3c7cc 68%, #5f6d7d 71%, #4b596a 74%); }
.app { position: relative; flex: 1 1 0; display: flex; justify-content: center; align-items: flex-start; min-width: 0; }
.app svg { width: 84px; height: 92px; }
.run::after { content: ""; position: absolute; bottom: 4px; left: 50%; width: 8px; height: 8px; margin-left: -4px; border-radius: 50%; background: #6e6e6e; }
.dark::after { background: #05080d; }
.badge { position: absolute; top: 8px; right: 2px; width: 30px; height: 30px; border-radius: 50%; background: #fc4542; color: #fff; font-size: 20px; font-weight: 400; line-height: 30px; text-align: center; }
.dock-rule { width: 38px; margin: 14px 0; background: linear-gradient(#b4b4b4, #b4b4b4) center / 2px 100% no-repeat; }
.rule-dark { background-image: linear-gradient(#12253b, #12253b); }

svg text { font-family: Inter, sans-serif; text-anchor: middle; fill: #fff; }
svg .t-w3 { font-size: 12px; fill: #159a68; }
svg .t-99 { font-size: 10px; font-weight: 700; }
svg .t-mar { font-size: 14px; }
svg .t-seven { font-size: 36px; font-weight: 300; fill: #222; }
svg .t-3d { font-size: 13px; fill: #333; }
svg .t-pages { font-size: 9px; font-weight: 600; }
svg .t-tv { font-size: 26px; }
svg .t-s { font-size: 32px; font-weight: 700; }
svg .t-ij { font: 700 20px "Liberation Mono", monospace; }
```

FILE: app.js
```js
// Preload the sample file so the picker shows its name.
const picked = new DataTransfer();
picked.items.add(new File(["Name,Age,City\n"], "sample.csv", { type: "text/csv" }));
document.getElementById("csv").files = picked.files;
```
